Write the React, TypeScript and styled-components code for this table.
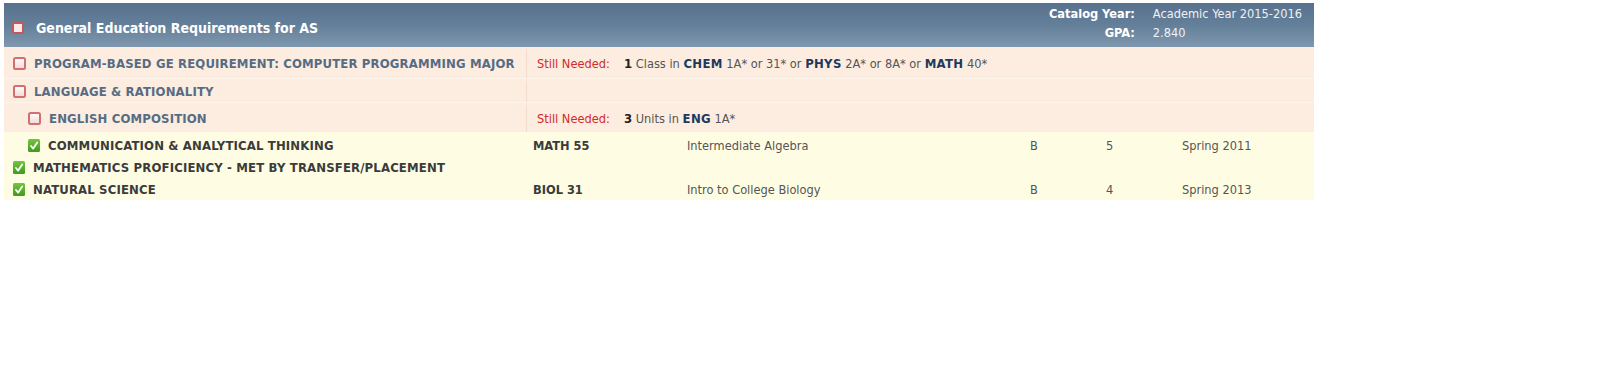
import React from "react";
import styled, { createGlobalStyle } from "styled-components";

const Global = createGlobalStyle`
  html, body { margin: 0; padding: 0; background: #ffffff; }
  body { font-family: "DejaVu Sans Condensed", "DejaVu Sans", sans-serif; }
`;

const Page = styled.div`
  padding: 3px 0 0 4px;
  width: 1310px;
`;

const Header = styled.div`
  height: 44px;
  display: flex;
  justify-content: space-between;
  background: linear-gradient(to bottom, #58728d 0%, #647f99 50%, #7f98af 100%);
  color: #ffffff;
`;

const TitleBox = styled.div`
  display: flex;
  align-items: center;
  gap: 12px;
  padding: 5px 0 0 8px;
`;

const Title = styled.span`
  font-weight: bold;
  font-size: 14px;
`;

const Meta = styled.div`
  display: grid;
  grid-template-columns: auto auto;
  grid-auto-rows: 19px;
  column-gap: 18px;
  align-items: center;
  padding: 1px 12px 0 0;
  font-size: 12.7px;
`;

const MetaLabel = styled.span`
  font-weight: bold;
  text-align: right;
`;

const MetaValue = styled.span`
  color: #eef2f6;
`;

const Group = styled.div<{ $tone: "need" | "done" }>`
  background: ${(p) => (p.$tone === "need" ? "#fcede0" : "#fefde4")};
  padding-top: ${(p) => (p.$tone === "need" ? "0" : "2px")};
`;

const NeedRow = styled.div<{ $h: number; $last?: boolean }>`
  display: grid;
  grid-template-columns: 523px 1fr;
  height: ${(p) => p.$h}px;
  box-sizing: border-box;
  padding-top: 2px;
  border-bottom: ${(p) => (p.$last ? "none" : "1px solid #fff4ea")};
`;

const DoneRow = styled.div`
  display: grid;
  grid-template-columns: 529px 154px 343px 76px 76px 1fr;
  height: 22px;
  align-items: center;
  font-size: 12.7px;
  color: #555555;
`;

const Label = styled.div<{ $indent?: boolean; $tone: "need" | "done"; $divider?: boolean }>`
  display: flex;
  align-items: center;
  gap: 8px;
  padding-left: ${(p) => (p.$indent ? "24px" : "9px")};
  font-weight: bold;
  font-size: 13px;
  letter-spacing: 0.15px;
  color: ${(p) => (p.$tone === "need" ? "#566c84" : "#3b3b3b")};
  border-right: ${(p) => (p.$divider ? "1px solid #f3dccb" : "none")};
  white-space: nowrap;
`;

const NeedCell = styled.div`
  display: flex;
  align-items: center;
  padding-left: 10px;
  font-size: 12.7px;
  color: #555555;
  white-space: pre;
`;

const StillNeeded = styled.span`
  color: #d22b2b;
  width: 87px;
`;

const Count = styled.b`
  color: #222222;
  font-size: 13px;
`;

const Subject = styled.b`
  color: #1c3a5c;
  font-size: 13px;
  letter-spacing: 0.3px;
`;

const Course = styled.span`
  font-weight: bold;
  color: #3a3a3a;
`;

const Box = styled.svg`
  flex: none;
  display: block;
`;

function RedBox() {
  return (
    <Box width={13} height={13} viewBox="0 0 13 13">
      <defs>
        <linearGradient id="rb" x1="0" y1="0" x2="0" y2="1">
          <stop offset="0" stopColor="#ffffff" />
          <stop offset="1" stopColor="#f3d6d6" />
        </linearGradient>
      </defs>
      <rect x="1" y="1" width="11" height="11" rx="1.5" fill="url(#rb)" stroke="#d27070" strokeWidth="2" />
    </Box>
  );
}

function HeaderBox() {
  return (
    <Box width={12} height={12} viewBox="0 0 12 12">
      <rect x="1" y="1" width="10" height="10" rx="1.5" fill="#fbeaea" stroke="#c45858" strokeWidth="2" />
    </Box>
  );
}

function GreenBox() {
  return (
    <Box width={12} height={13} viewBox="0 0 12 13">
      <defs>
        <linearGradient id="gb" x1="0" y1="0" x2="0" y2="1">
          <stop offset="0" stopColor="#74c63e" />
          <stop offset="1" stopColor="#3f9a1f" />
        </linearGradient>
      </defs>
      <rect x="0" y="0" width="12" height="13" rx="1.5" fill="url(#gb)" />
      <path d="M3 7 L5.2 9.6 L9.2 3.6" fill="none" stroke="#ffffff" strokeWidth="1.8" strokeLinecap="round" strokeLinejoin="round" />
    </Box>
  );
}

type Done = { label: string; indent?: boolean; course?: string; title?: string; grade?: string; units?: string; term?: string };

const done: Done[] = [
  { label: "COMMUNICATION & ANALYTICAL THINKING", indent: true, course: "MATH 55", title: "Intermediate Algebra", grade: "B", units: "5", term: "Spring 2011" },
  { label: "MATHEMATICS PROFICIENCY - MET BY TRANSFER/PLACEMENT" },
  { label: "NATURAL SCIENCE", course: "BIOL 31", title: "Intro to College Biology", grade: "B", units: "4", term: "Spring 2013" },
];

export default function App() {
  return (
    <Page>
      <Global />
      <Header>
        <TitleBox>
          <HeaderBox />
          <Title>General Education Requirements for AS</Title>
        </TitleBox>
        <Meta>
          <MetaLabel>Catalog Year:</MetaLabel>
          <MetaValue>Academic Year 2015-2016</MetaValue>
          <MetaLabel>GPA:</MetaLabel>
          <MetaValue>2.840</MetaValue>
        </Meta>
      </Header>
      <Group $tone="need">
        <NeedRow $h={32}>
          <Label $tone="need" $divider>
            <RedBox />
            PROGRAM-BASED GE REQUIREMENT: COMPUTER PROGRAMMING MAJOR
          </Label>
          <NeedCell>
            <StillNeeded>Still Needed:</StillNeeded>
            <Count>1</Count>
            {" Class in "}
            <Subject>CHEM</Subject>
            {" 1A* or 31* or "}
            <Subject>PHYS</Subject>
            {" 2A* or 8A* or "}
            <Subject>MATH</Subject>
            {" 40*"}
          </NeedCell>
        </NeedRow>
        <NeedRow $h={24}>
          <Label $tone="need" $divider>
            <RedBox />
            LANGUAGE &amp; RATIONALITY
          </Label>
          <NeedCell />
        </NeedRow>
        <NeedRow $h={29} $last>
          <Label $tone="need" $indent $divider>
            <RedBox />
            ENGLISH COMPOSITION
          </Label>
          <NeedCell>
            <StillNeeded>Still Needed:</StillNeeded>
            <Count>3</Count>
            {" Units in "}
            <Subject>ENG</Subject>
            {" 1A*"}
          </NeedCell>
        </NeedRow>
      </Group>
      <Group $tone="done">
        {done.map((d) => (
          <DoneRow key={d.label}>
            <Label $tone="done" $indent={d.indent}>
              <GreenBox />
              {d.label}
            </Label>
            <Course>{d.course}</Course>
            <span>{d.title}</span>
            <span>{d.grade}</span>
            <span>{d.units}</span>
            <span>{d.term}</span>
          </DoneRow>
        ))}
      </Group>
    </Page>
  );
}
